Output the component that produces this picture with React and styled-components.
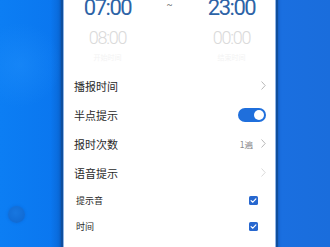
import React from 'react'
import styled, { createGlobalStyle } from 'styled-components'

const GlobalStyle = createGlobalStyle`
  html, body {
    margin: 0;
    padding: 0;
    width: 330px;
    height: 247px;
    overflow: hidden;
  }
  body {
    font-family: "Noto Sans CJK SC", "Noto Sans", sans-serif;
    background: linear-gradient(90deg, #0c7ef4 0%, #0a76ef 18%, #0f6cdc 20%, #1a6fe0 85%, #1a6ddc 100%);
  }
`

const Chevron = () => (
  <svg width="5" height="9" viewBox="0 0 5 9">
    <path d="M0.8 0.8 L4.2 4.5 L0.8 8.2" fill="none" stroke="#b8b8b8" strokeWidth="1" strokeLinecap="round" strokeLinejoin="round" />
  </svg>
)

const Check = () => (
  <svg width="9" height="9" viewBox="0 0 9 9">
    <rect x="0" y="0" width="9" height="9" rx="1.6" fill="#2767cf" />
    <path d="M2.1 4.6 L3.8 6.2 L6.9 2.9" fill="none" stroke="#fff" strokeWidth="1.2" strokeLinecap="round" strokeLinejoin="round" />
  </svg>
)

const App = () => {
  return (
    <>
      <GlobalStyle />
      <Page>
        <Gutter>
          <Glow />
          <Dot />
        </Gutter>
        <Card>
          <TimeSection>
            <TimeGrid>
              <BigTime>07:00</BigTime>
              <Tilde>~</Tilde>
              <BigTime>23:00</BigTime>
              <SmallTime>08:00</SmallTime>
              <span />
              <SmallTime>00:00</SmallTime>
              <Hint>开始时间</Hint>
              <span />
              <Hint>结束时间</Hint>
            </TimeGrid>
          </TimeSection>

          <Row>
            <Label>播报时间</Label>
            <Trail><Chevron /></Trail>
          </Row>
          <Row>
            <Label>半点提示</Label>
            <Toggle><Knob /></Toggle>
          </Row>
          <Row>
            <Label>报时次数</Label>
            <Trail>
              <Value>1遍</Value>
              <Chevron />
            </Trail>
          </Row>
          <Row>
            <Label>语音提示</Label>
            <Trail $faded><Chevron /></Trail>
          </Row>

          <SubRow>
            <SubLabel>提示音</SubLabel>
            <Check />
          </SubRow>
          <SubRow>
            <SubLabel>时间</SubLabel>
            <Check />
          </SubRow>
          <SubRow $faded>
            <SubLabel>日期</SubLabel>
            <Check />
          </SubRow>
        </Card>
        <RightSide />
      </Page>
    </>
  )
}

export default App

const Page = styled.div`
  display: flex;
  width: 330px;
  height: 247px;
  overflow: hidden;
`

const Gutter = styled.div`
  position: relative;
  width: 63px;
  flex-shrink: 0;
  background: linear-gradient(90deg, rgba(0, 0, 0, 0) 80%, rgba(10, 50, 120, 0.25) 100%);
`

const Glow = styled.div`
  position: absolute;
  left: -20px;
  top: 20px;
  width: 80px;
  height: 90px;
  border-radius: 50%;
  background: radial-gradient(circle, rgba(40, 150, 255, 0.35), rgba(40, 150, 255, 0) 70%);
`

const Dot = styled.div`
  position: absolute;
  left: 8px;
  top: 206px;
  width: 17px;
  height: 17px;
  border-radius: 50%;
  background: radial-gradient(circle at 45% 40%, #1877e0, #0e66cf);
  box-shadow: 0 0 3px rgba(0, 60, 150, 0.25);
`

const Card = styled.div`
  width: 211px;
  flex-shrink: 0;
  background: #fff;
  box-shadow: 0 0 0 1px #8fb4e6, 0 0 0 3px #0f4f9e, 0 0 3px 3px rgba(8, 50, 110, 0.5);
  margin-left: 1px;
  z-index: 1;
`

const RightSide = styled.div`
  flex: 1;
`

const TimeSection = styled.div`
  margin-top: -7px;
  padding-bottom: 10px;
`

const TimeGrid = styled.div`
  display: grid;
  grid-template-columns: 70px 54px 70px;
  justify-content: center;
  justify-items: center;
  align-items: center;
  font-family: Roboto, "Noto Sans", sans-serif;
`

const BigTime = styled.div`
  font-size: 22px;
  line-height: 30px;
  height: 30px;
  letter-spacing: -1.5px;
  color: #2d63a6;
  font-weight: 400;
`

const Tilde = styled.div`
  font-size: 9px;
  line-height: 30px;
  color: #666;
  margin-top: -6px;
`

const SmallTime = styled.div`
  font-size: 18px;
  line-height: 30px;
  height: 30px;
  letter-spacing: -1.2px;
  color: #dadada;
  font-weight: 300;
`

const Hint = styled.div`
  font-size: 7px;
  line-height: 8px;
  height: 8px;
  color: #f3f3f3;
  font-family: "Noto Sans CJK SC", sans-serif;
`

const Row = styled.div`
  display: flex;
  align-items: center;
  justify-content: space-between;
  height: 29px;
  padding: 0 8px 0 10px;
`

const Label = styled.span`
  font-size: 11px;
  color: #2a2a2a;
`

const Trail = styled.div`
  display: flex;
  align-items: center;
  gap: 8px;
  opacity: ${p => (p.$faded ? 0.5 : 1)};
  padding-right: 1px;
`

const Value = styled.span`
  font-size: 8.5px;
  color: #8a8a8a;
`

const Toggle = styled.div`
  display: flex;
  align-items: center;
  justify-content: flex-end;
  width: 28px;
  height: 14px;
  padding: 0 2px;
  box-sizing: border-box;
  border-radius: 7px;
  background: #1f6fdc;
  margin-right: 1px;
`

const Knob = styled.div`
  width: 10px;
  height: 10px;
  border-radius: 50%;
  background: #fff;
`

const SubRow = styled.div`
  display: flex;
  align-items: center;
  justify-content: space-between;
  height: 26px;
  padding: 0 17px 0 12px;
  opacity: ${p => (p.$faded ? 0.3 : 1)};

  svg {
    display: block;
  }
`

const SubLabel = styled.span`
  font-size: 9px;
  color: #2a2a2a;
`
